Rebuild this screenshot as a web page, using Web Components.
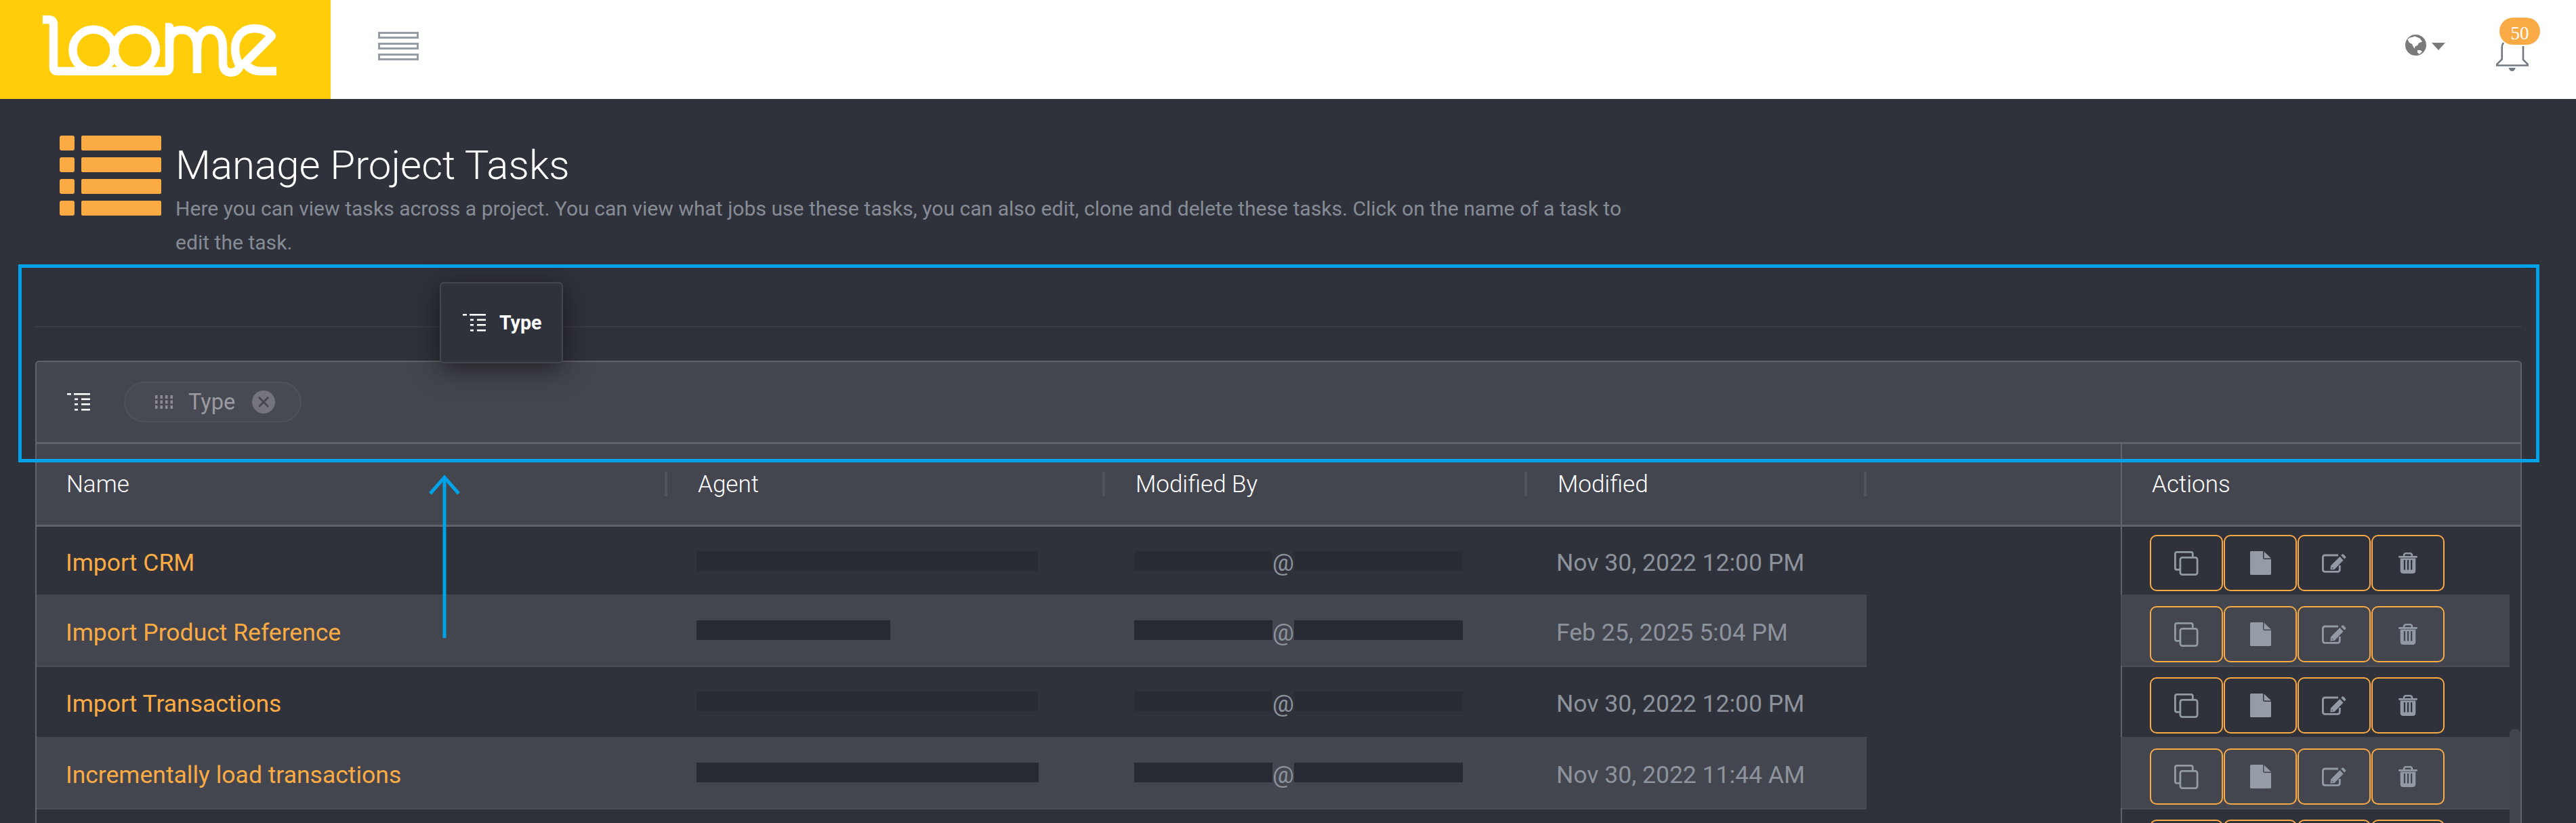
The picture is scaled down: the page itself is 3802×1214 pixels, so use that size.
<!DOCTYPE html>
<html>
<head>
<meta charset="utf-8">
<title>Manage Project Tasks</title>
<style>
html, body { margin: 0; padding: 0; height: 1214px; overflow: hidden; background: #30323b; }
body { font-family: Roboto, "Liberation Sans", sans-serif; }
</style>
</head>
<body>
<loome-app>
    <top-bar></top-bar>
    <page-heading>
        <span slot="title">Manage Project Tasks</span>
        <span>Here you can view tasks across a project. You can view what jobs use these tasks, you can also edit, clone and delete these tasks. Click on the name of a task to edit the task.</span>
    </page-heading>
    <task-grid>
        <task-row agent="504" first><span slot="name">Import CRM</span><span slot="date">Nov 30, 2022 12:00 PM</span></task-row>
        <task-row agent="286" alt><span slot="name">Import Product Reference</span><span slot="date">Feb 25, 2025 5:04 PM</span></task-row>
        <task-row agent="504"><span slot="name">Import Transactions</span><span slot="date">Nov 30, 2022 12:00 PM</span></task-row>
        <task-row agent="505" alt><span slot="name">Incrementally load transactions</span><span slot="date">Nov 30, 2022 11:44 AM</span></task-row>
        <task-row empty></task-row>
    </task-grid>
    <drag-ghost>Type</drag-ghost>
    <callout-frame></callout-frame>
</loome-app>

<script>
const GROUP_ICON = `<svg width="34" height="26" viewBox="0 0 34 26" fill="currentColor">
    <rect x="0" y="0" width="6" height="2.6"/><rect x="10" y="0" width="24" height="2.6"/>
    <rect x="11" y="7.5" width="5" height="2.6"/><rect x="21" y="7.5" width="13" height="2.6"/>
    <rect x="11" y="15" width="5" height="2.6"/><rect x="21" y="15" width="13" height="2.6"/>
    <rect x="11" y="23" width="5" height="2.6"/><rect x="21" y="23" width="13" height="2.6"/>
</svg>`;

class LoomeApp extends HTMLElement {
    constructor() {
        super();
        let shadowRoot = this.attachShadow({ mode: 'open' });
        shadowRoot.innerHTML = `
        <style>
        :host {
            display: flex;
            flex-direction: column;
            position: relative;
            width: 3802px;
            height: 1214px;
            overflow: hidden;
            background: #30323b;
        }
        </style>
        <slot></slot>
        `;
    }
}

class TopBar extends HTMLElement {
    constructor() {
        super();
        let shadowRoot = this.attachShadow({ mode: 'open' });
        shadowRoot.innerHTML = `
        <style>
        :host {
            display: flex;
            align-items: flex-start;
            height: 146px;
            background: #fff;
            flex: none;
        }
        .brand {
            width: 488px;
            height: 146px;
            background: #ffcd09;
            padding: 20px 0 0 60px;
            box-sizing: border-box;
            flex: none;
        }
        .brand svg { display: block; }
        .burger {
            margin: 47px 0 0 70px;
            width: 60px;
            display: flex;
            flex-direction: column;
            gap: 6px;
        }
        .burger i {
            display: block;
            height: 10px;
            box-sizing: border-box;
            border: 3px solid #959ca5;
        }
        .right { margin-left: auto; display: flex; align-items: flex-start; }
        .globe { margin-top: 51px; display: block; }
        .caret { margin: 63px 0 0 8px; display: block; }
        .bell { margin: 60px 70px 0 75px; position: relative; width: 48px; height: 46px; }
        .bell svg { display: block; }
        .badge {
            position: absolute;
            left: 5px;
            top: -34px;
            width: 60px;
            height: 40px;
            border-radius: 20px;
            background: #fbab45;
            color: #fff;
            font: 27px/46px "Liberation Serif", serif;
            text-align: center;
        }
        </style>
        <div class="brand">
            <svg width="360" height="100" viewBox="60 20 360 100" fill="none" stroke="#fff" stroke-width="12.5" stroke-linejoin="round">
                <path d="M63 29 H72 Q79 29 79 36 V99 Q79 105 85 105 H244 Q250 105 250 99 V40 H244"/>
                <circle cx="138" cy="74" r="30.5"/>
                <circle cx="199.5" cy="74" r="30.5"/>
                <path d="M250 64 C250 51 257 44 268 44 C284 44 291 55 291 72 V108"/>
                <path d="M291 72 C291 55 298 44 310 44 C323 44 329 55 329 72 V92 C329 103 334 107 341 107 C348 107 352 102 354 98 C349 88 347 80 347 72 C347 54 359 42 375 42 C387 42 396 47 401 53 L362 92.5 C367 102 376 105 385 105 H408"/>
            </svg>
        </div>
        <div class="burger"><i></i><i></i><i></i></div>
        <div class="right">
            <svg class="globe" width="31" height="31" viewBox="0 0 31 31">
                <circle cx="15.5" cy="15.5" r="15.5" fill="#7a7a7a"/>
                <path fill="#fff" d="M3.5 7 L7 4.5 L10 4 L14 2.5 L21.5 5.5 L25 10.5 L20 12.5 L18.3 15.7 L15 17.3 L13.3 20.7 L10 14 L6 12 Z"/>
                <path fill="#fff" d="M18 23 L22 23 L25 25 L21 29 L18 26.5 Z"/>
            </svg>
            <svg class="caret" width="20" height="11" viewBox="0 0 20 11"><path fill="#7a7a7a" d="M0 0 H20 L10 11 Z"/></svg>
            <div class="bell">
                <svg width="48" height="46" viewBox="0 0 48 46" fill="none">
                    <path stroke="#717a83" stroke-width="2.6" d="M11 3 Q8.7 6 8.7 10 V27.5 L1 35 V36.5 H47 V35 L40 28 V8"/>
                    <path fill="#717a83" d="M18.7 40 H28.7 Q27.5 45 23.7 45 Q20 45 18.7 40 Z"/>
                </svg>
                <span class="badge">50</span>
            </div>
        </div>
        `;
    }
}

class PageHeading extends HTMLElement {
    constructor() {
        super();
        let shadowRoot = this.attachShadow({ mode: 'open' });
        shadowRoot.innerHTML = `
        <style>
        :host {
            display: flex;
            align-items: flex-start;
            flex: none;
            height: 237px;
            padding-left: 88px;
        }
        svg { margin-top: 54px; flex: none; display: block; }
        .text { margin: 58px 0 0 21px; width: 2180px; }
        h1 {
            margin: 0;
            font: 300 60px/79px Roboto, sans-serif;
            color: #fff;
        }
        p {
            margin: 0;
            font: 400 30.1px/50px Roboto, sans-serif;
            color: #868c96;
        }
        </style>
        <svg width="150" height="118" viewBox="0 0 150 118" fill="#fbab44">
            <rect width="22" height="22" rx="3"/><rect x="32" width="118" height="22" rx="2"/>
            <rect y="32" width="22" height="22" rx="3"/><rect x="32" y="32" width="118" height="22" rx="2"/>
            <rect y="64" width="22" height="22" rx="3"/><rect x="32" y="64" width="118" height="22" rx="2"/>
            <rect y="96" width="22" height="22" rx="3"/><rect x="32" y="96" width="118" height="22" rx="2"/>
        </svg>
        <div class="text">
            <h1><slot name="title"></slot></h1>
            <p><slot></slot></p>
        </div>
        `;
    }
}

class TaskGrid extends HTMLElement {
    constructor() {
        super();
        let shadowRoot = this.attachShadow({ mode: 'open' });
        shadowRoot.innerHTML = `
        <style>
        :host {
            display: block;
            flex: none;
            margin-left: 51px;
            width: 3671px;
        }
        .rule { height: 2px; background: #393b45; margin-bottom: 49px; margin-top: 98px; }
        .card {
            margin-left: 1px;
            border: 2px solid #62626a;
            border-bottom: 0;
            border-radius: 6px 6px 0 0;
            height: 700px;
            box-sizing: border-box;
            position: relative;
            overflow: hidden;
        }
        .group {
            height: 118px;
            background: #44464f;
            border-bottom: 3px solid #62626a;
            display: flex;
            align-items: center;
            box-sizing: content-box;
            padding-left: 45px;
            color: #fff;
        }
        .chip {
            margin-left: 50px;
            height: 60px;
            width: 262px;
            box-sizing: border-box;
            border: 2px solid #50525b;
            border-radius: 30px;
            background: #484a53;
            display: flex;
            align-items: center;
            padding-left: 44px;
            color: #9a9aa0;
            font: 400 32.6px Roboto, sans-serif;
        }
        .chip .label { margin-left: 22px; }
        .chip .close { margin-left: 25px; display: block; }
        .head {
            display: grid;
            grid-template-columns: 931px 646px 623px 501px 375px 1fr;
            height: 119px;
            background: #44464f;
            border-bottom: 3px solid #62626a;
            color: #fff;
            font: 300 35px Roboto, sans-serif;
        }
        .head div {
            display: flex;
            align-items: center;
            padding: 0 0 0 45px;
        }
        .head div:first-child { padding-left: 44px; }
        .head div i {
            display: block;
            margin-left: auto;
            width: 4px;
            height: 36px;
            background: #53545b;
            position: relative;
            top: -1px;
        }
        .head .pin { border-left: 2px solid #62626a; padding-left: 44px; }
        .body { display: flex; }
        .rows { width: 3650px; flex: none; }
        .track { flex: 1; }
        .thumb { margin-top: 298px; height: 200px; border-radius: 8px 8px 0 0; background: #43454e; }
        </style>
        <div class="rule"></div>
        <div class="card">
            <div class="group">
                ${GROUP_ICON}
                <div class="chip">
                    <svg width="27" height="20" viewBox="0 0 27 20" fill="#8c8c92">
                        ${[0, 7.5, 15, 22.5].map(x => [0, 7.5, 15].map(y => `<rect x="${x}" y="${y}" width="3.5" height="5"/>`).join('')).join('')}
                    </svg>
                    <span class="label">Type</span>
                    <svg class="close" width="34" height="34" viewBox="0 0 34 34">
                        <circle cx="17" cy="17" r="17" fill="#73747d"/>
                        <path d="M10 10 L24 24 M24 10 L10 24" stroke="#44464f" stroke-width="2.6"/>
                    </svg>
                </div>
            </div>
            <div class="head">
                <div>Name<i></i></div>
                <div>Agent<i></i></div>
                <div>Modified By<i></i></div>
                <div>Modified<i></i></div>
                <div></div>
                <div class="pin">Actions</div>
            </div>
            <div class="body">
                <div class="rows"><slot></slot></div>
                <div class="track"><div class="thumb"></div></div>
            </div>
        </div>
        `;
    }
}

class TaskRow extends HTMLElement {
    constructor() {
        super();
        let shadowRoot = this.attachShadow({ mode: 'open' });
        const agent = this.getAttribute('agent') || 0;
        const empty = this.hasAttribute('empty');
        shadowRoot.innerHTML = `
        <style>
        :host {
            display: grid;
            grid-template-columns: 2701px 375px 1fr;
            height: 105px;
            font: 400 35.5px Roboto, sans-serif;
            color: #8d939c;
        }
        :host([first]) { height: 100px; }
        :host([first]) .pin { padding-top: 12px; }
        .main {
            display: grid;
            grid-template-columns: 931px 646px 623px 501px;
            align-items: center;
        }
        .main > div { padding-left: 43px; height: 100%; display: flex; align-items: center; position: relative; top: 3px; }
        .main .name { color: #fbab44; }
        .mask { display: inline-block; height: 29px; background: #2a2c34; position: relative; top: -3px; flex: none; }
        .pin {
            border-left: 2px solid #62626a;
            padding: 17px 0 0 41px;
            display: flex;
            align-items: flex-start;
            gap: 1px;
        }
        :host([alt]) .main, :host([alt]) .pin {
            background: #44464f;
            box-shadow: 0 2px 0 #4d4e55;
        }
        :host([alt]) .pin { border-left-color: #4d4e55; }
        :host([alt]) .mask { background: #282a33; }
        </style>
        <div class="main">
            ${empty ? '' : `
            <div class="name"><slot name="name"></slot></div>
            <div><span class="mask" style="width:${agent}px"></span></div>
            <div><span class="mask" style="width:204px"></span><span>@</span><span class="mask" style="width:249px"></span></div>
            <div><slot name="date"></slot></div>
            `}
        </div>
        <div></div>
        <div class="pin">
            <icon-button kind="copy"></icon-button>
            <icon-button kind="doc"></icon-button>
            <icon-button kind="edit"></icon-button>
            <icon-button kind="trash"></icon-button>
        </div>
        `;
    }
}

const ICONS = {
    copy: `<svg width="36" height="36" viewBox="0 0 36 36" fill="none" stroke="#929aa3" stroke-width="2.8">
        <rect x="8.9" y="9.4" width="25.2" height="25.2" rx="3"/>
        <path d="M8 27.3 H3.9 Q1.4 27.3 1.4 24.8 V3.9 Q1.4 1.4 3.9 1.4 H24.8 Q27.3 1.4 27.3 3.9 V8"/>
    </svg>`,
    doc: `<svg width="31" height="35" viewBox="0 0 31 35" fill="#959ca5">
        <path d="M1.5 0 H19 V9.5 Q19 12 21.5 12 H31 V33.5 Q31 35 29.5 35 H1.5 Q0 35 0 33.5 V1.5 Q0 0 1.5 0 Z"/>
        <path d="M20.5 .5 L31 10.5 H20.5 Z"/>
    </svg>`,
    edit: `<svg width="36" height="28" viewBox="0 0 36 28" fill="none">
        <path stroke="#929aa3" stroke-width="2.8" d="M26.3 17 V23 Q26.3 26.3 23 26.3 H4.7 Q1.4 26.3 1.4 23 V5 Q1.4 2 4.7 2 H24"/>
        <path fill="#929aa3" fill-rule="evenodd" d="M12.5 23.5 L13 17.5 L26.5 4 L31.5 9.5 L18.5 23 Z M15 19.5 L14.6 21.6 L16.8 21.2 Z"/>
        <path fill="#929aa3" d="M28.2 2.2 L30 .6 Q31 0 32 .8 L35 4 Q35.6 5 35 5.8 L33.2 7.6 Z"/>
    </svg>`,
    trash: `<svg width="28" height="31" viewBox="0 0 28 31" fill="#929aa3">
        <path fill="none" stroke="#929aa3" stroke-width="2.6" d="M8 6 V4.5 Q8 1.3 11.2 1.3 H16.8 Q20 1.3 20 4.5 V6"/>
        <rect x="0" y="5" width="28" height="2.8" rx="1.2"/>
        <path fill-rule="evenodd" d="M2.7 8.6 H25.3 V26.5 Q25.3 31 20.8 31 H7.2 Q2.7 31 2.7 26.5 Z M7.8 11 V25.5 H10.1 V11 Z M12.9 11 V25.5 H15.2 V11 Z M18 11 V25.5 H20.3 V11 Z"/>
    </svg>`
};

class IconButton extends HTMLElement {
    constructor() {
        super();
        let shadowRoot = this.attachShadow({ mode: 'open' });
        shadowRoot.innerHTML = `
        <style>
        :host {
            display: flex;
            align-items: center;
            justify-content: center;
            box-sizing: border-box;
            width: 108px;
            height: 83px;
            border: 2.5px solid #fbab44;
            border-radius: 10px;
            flex: none;
        }
        svg { display: block; }
        </style>
        ${ICONS[this.getAttribute('kind')]}
        `;
    }
}

class DragGhost extends HTMLElement {
    constructor() {
        super();
        let shadowRoot = this.attachShadow({ mode: 'open' });
        shadowRoot.innerHTML = `
        <style>
        :host {
            position: absolute;
            left: 649px;
            top: 416px;
            width: 182px;
            height: 120px;
            box-sizing: border-box;
            display: flex;
            align-items: center;
            padding-left: 32px;
            gap: 20px;
            background: #30323b;
            border: 2px solid #44464d;
            border-radius: 6px;
            box-shadow: 0 8px 40px rgba(0, 0, 0, .55);
            color: #fff;
            font: 700 28.6px Roboto, sans-serif;
        }
        svg { display: block; }
        </style>
        ${GROUP_ICON}
        <slot></slot>
        `;
    }
}

class CalloutFrame extends HTMLElement {
    constructor() {
        super();
        let shadowRoot = this.attachShadow({ mode: 'open' });
        shadowRoot.innerHTML = `
        <style>
        :host {
            position: absolute;
            left: 0;
            top: 0;
            width: 3802px;
            height: 1214px;
            pointer-events: none;
        }
        .box {
            position: absolute;
            left: 27px;
            top: 390px;
            width: 3721px;
            height: 292px;
            box-sizing: border-box;
            border: 5px solid #00a3e8;
        }
        svg { position: absolute; left: 630px; top: 700px; display: block; }
        </style>
        <div class="box"></div>
        <svg width="52" height="244" viewBox="0 0 52 244" fill="none" stroke="#00a3e8" stroke-width="5">
            <path d="M26 4 V241"/>
            <path d="M5 28 L26 4 L47 28"/>
        </svg>
        `;
    }
}

customElements.define('loome-app', LoomeApp);
customElements.define('top-bar', TopBar);
customElements.define('page-heading', PageHeading);
customElements.define('icon-button', IconButton);
customElements.define('task-row', TaskRow);
customElements.define('task-grid', TaskGrid);
customElements.define('drag-ghost', DragGhost);
customElements.define('callout-frame', CalloutFrame);
</script>
</body>
</html>
